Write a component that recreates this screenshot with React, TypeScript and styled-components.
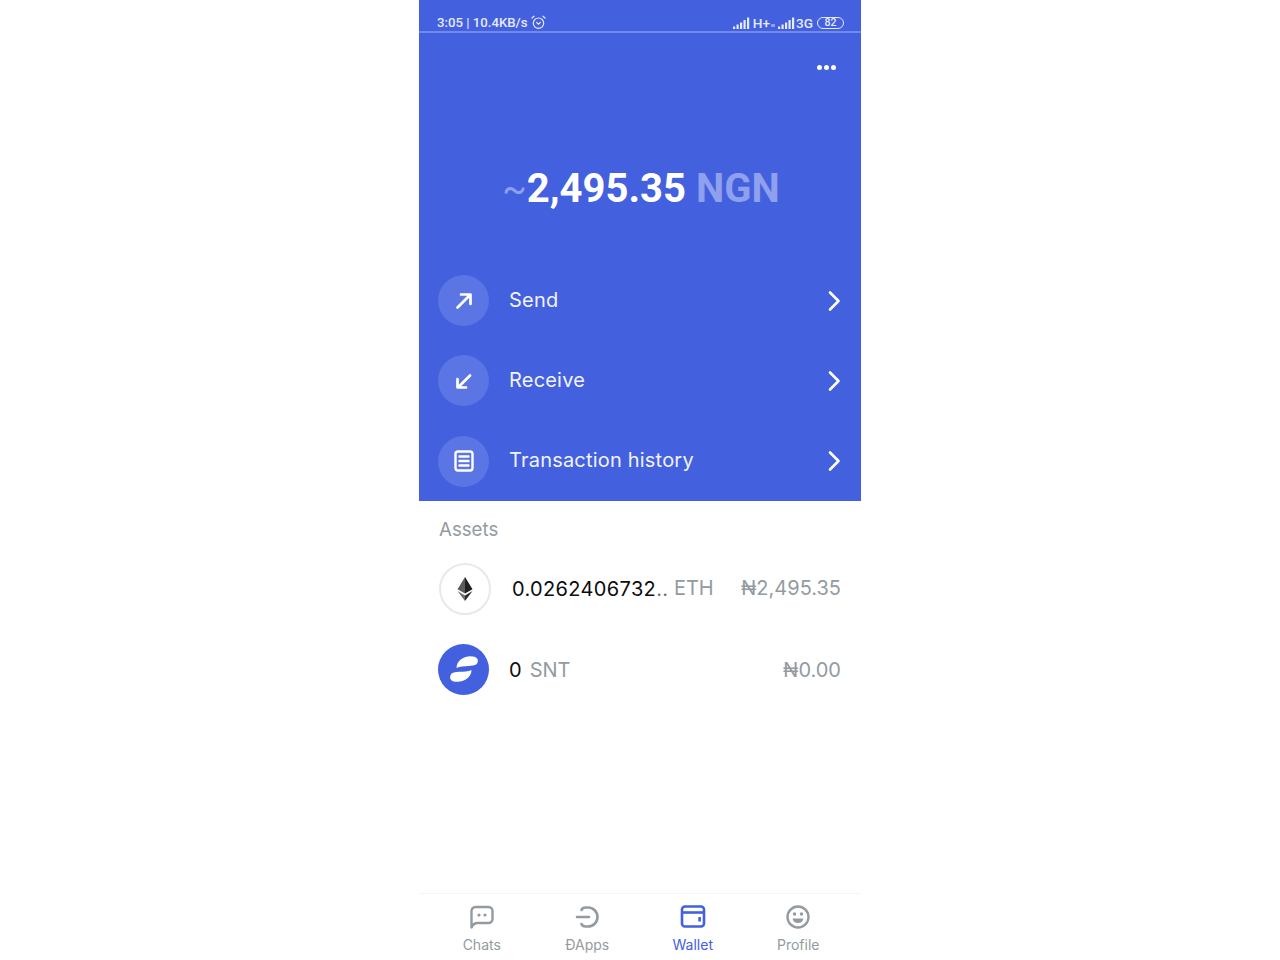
import React from "react";
import styled, { createGlobalStyle } from "styled-components";

const Global = createGlobalStyle`
  html, body { margin: 0; padding: 0; background: #fff; }
  body { font-family: Inter, "Liberation Sans", sans-serif; }
`;

const Page = styled.div`
  width: 1280px;
  height: 960px;
  display: flex;
  justify-content: center;
  background: #fff;
  overflow: hidden;
`;
const Phone = styled.div`
  width: 442px;
  height: 960px;
  display: flex;
  flex-direction: column;
`;
const Hero = styled.section`
  height: 501px;
  flex: none;
  background: #4360df;
  color: #fff;
  display: flex;
  flex-direction: column;
`;
const StatusBar = styled.div`
  height: 33px;
  box-sizing: border-box;
  padding: 14px 17px 0 18px;
  border-bottom: 2px solid #7389ea;
  display: flex;
  justify-content: space-between;
  align-items: center;
  font-family: Roboto, "Liberation Sans", sans-serif;
  font-weight: 500;
  font-size: 13.2px;
  line-height: 18px;
  color: #e6eafb;
  flex: none;
`;
const StatusGroup = styled.div`
  display: flex;
  align-items: center;
  gap: 3px;
`;
const NetworkLabel = styled.span<{ $pull?: boolean }>`
  font-size: 13.6px;
  margin-left: ${(p) => (p.$pull ? "-2px" : "0")};
`;
const TinyMark = styled.span`
  width: 4px;
  height: 3px;
  margin: 5px 0 0 -2px;
  background: #8fa0ec;
`;
const Battery = styled.span`
  width: 25px;
  height: 10px;
  border: 1.5px solid #e6eafb;
  border-radius: 6px;
  font-size: 10.5px;
  line-height: 10px;
  text-align: center;
  margin-left: 1px;
`;
const MoreRow = styled.div`
  height: 14px;
  margin-top: 27px;
  padding-right: 25px;
  display: flex;
  justify-content: flex-end;
  align-items: center;
  gap: 2px;
  flex: none;
`;
const Dot = styled.span`
  width: 5px;
  height: 5px;
  border-radius: 50%;
  background: #fff;
`;
const Balance = styled.div`
  margin-top: 89px;
  height: 52px;
  padding-left: 2px;
  display: flex;
  align-items: center;
  justify-content: center;
  font-family: Roboto, "Liberation Sans", sans-serif;
  font-weight: 700;
  font-size: 40px;
  line-height: 52px;
  white-space: nowrap;
  flex: none;
`;
const Tilde = styled.span`
  font-weight: 400;
  font-size: 36px;
  color: #8fa0ec;
`;
const Currency = styled.span`
  color: #8ea0ee;
  margin-left: 10px;
`;
const Actions = styled.div`
  margin-top: 60px;
  display: flex;
  flex-direction: column;
  gap: 29.3px;
  padding: 0 19px 0 20px;
`;
const ActionRow = styled.div`
  height: 51px;
  display: flex;
  align-items: center;
`;
const ActionCircle = styled.div`
  width: 51px;
  height: 51px;
  margin-left: -1px;
  flex: none;
  border-radius: 50%;
  background: #5b75e4;
  display: flex;
  align-items: center;
  justify-content: center;
`;
const ActionLabel = styled.div`
  margin-left: 20px;
  margin-top: -2px;
  flex: 1;
  font-size: 20px;
  letter-spacing: 0.2px;
  color: #f1f3fd;
`;
const AssetsTitle = styled.div`
  margin: 17px 0 0 20px;
  height: 24px;
  font-size: 18.7px;
  line-height: 24px;
  color: #939ba1;
  flex: none;
`;
const AssetRow = styled.div<{ $top: number }>`
  margin-top: ${(p) => p.$top}px;
  padding: 0 20px;
  height: 52px;
  display: flex;
  align-items: center;
  font-size: 20px;
  flex: none;
`;
const EthCircle = styled.div`
  width: 48px;
  height: 48px;
  border: 2px solid #e7e9ee;
  border-radius: 50%;
  flex: none;
  display: flex;
  align-items: center;
  justify-content: center;
`;
const SntCircle = styled.div`
  width: 51px;
  height: 51px;
  margin-left: -1px;
  border-radius: 50%;
  background: #4360df;
  flex: none;
  display: flex;
  align-items: center;
  justify-content: center;
`;
const Amount = styled.span<{ $gap: number; $spread?: boolean; $lift?: number }>`
  margin-left: ${(p) => p.$gap}px;
  margin-top: ${(p) => p.$lift ?? 0}px;
  color: #0c0c10;
  letter-spacing: ${(p) => (p.$spread ? "0.35px" : "0")};
`;
const Ellipsis = styled.span`
  color: #6f7479;
`;
const Symbol = styled.span<{ $gap: number; $drop?: number }>`
  margin-left: ${(p) => p.$gap}px;
  color: #939ba1;
  transform: translateY(${(p) => p.$drop ?? -1}px);
`;
const Fiat = styled.span<{ $drop?: number }>`
  margin-left: auto;
  color: #939ba1;
  font-family: Inter, "Noto Sans", sans-serif;
  transform: translateY(${(p) => p.$drop ?? -1}px);
`;
const Spacer = styled.div`
  flex: 1;
`;
const Nav = styled.nav`
  height: 67px;
  box-sizing: border-box;
  border-top: 1px solid #f5f5f7;
  padding: 0 10px;
  display: grid;
  grid-template-columns: repeat(4, 1fr);
  flex: none;
`;
const NavItem = styled.div<{ $active?: boolean }>`
  display: flex;
  flex-direction: column;
  align-items: center;
  padding-top: 10px;
  color: ${(p) => (p.$active ? "#4360df" : "#939ba1")};
  font-size: 14px;
  line-height: 18px;
  gap: 6px;
`;
const NavIcon = styled.svg`
  width: 26px;
  height: 26px;
  display: block;
`;

const Chevron = () => (
  <svg width="16" height="24" viewBox="0 0 16 24" fill="none" stroke="#fff" strokeWidth="2.6" strokeLinecap="round" strokeLinejoin="round">
    <path d="M4 3.5 L12.5 12 L4 20.5" />
  </svg>
);

const Signal = () => (
  <svg width="17" height="12" viewBox="0 0 17 12" fill="#e6eafb">
    <rect x="0" y="9.5" width="2.2" height="2.5" />
    <rect x="3.5" y="7.5" width="2.2" height="4.5" />
    <rect x="7" y="5.5" width="2.2" height="6.5" />
    <rect x="10.5" y="3" width="2.2" height="9" />
    <rect x="14" y="0.5" width="2.2" height="11.5" />
  </svg>
);

const Alarm = () => (
  <svg width="15" height="15" viewBox="0 0 15 15" fill="none" stroke="#e6eafb" strokeWidth="1.2" strokeLinecap="round" strokeLinejoin="round">
    <circle cx="7.5" cy="8.2" r="5.2" />
    <path d="M1 3 L3 1.2 M14 3 L12 1.2 M5.6 7.4 L7.5 9.2 L9.4 7.4" />
  </svg>
);

const tabs: { label: string; active?: boolean; icon: React.ReactNode }[] = [
  {
    label: "Chats",
    icon: (
      <>
        <path d="M2.5 23.5 V7 A4 4 0 0 1 6.5 3 H19.5 A4 4 0 0 1 23.5 7 V15 A4 4 0 0 1 19.5 19 H8 Q4 19.5 2.5 23.5 Z" fill="none" stroke="#939ba1" strokeWidth="2.4" strokeLinejoin="round" />
        <circle cx="10" cy="11" r="1.6" fill="#939ba1" />
        <circle cx="16" cy="11" r="1.6" fill="#939ba1" />
      </>
    ),
  },
  {
    label: "ÐApps",
    icon: (
      <path d="M7.5 6 Q8.5 3.5 11.5 3.5 H14 A9.3 9.3 0 0 1 14 22.5 H11.5 Q8.5 22.5 7.5 20 M3 13 H15" fill="none" stroke="#939ba1" strokeWidth="2.6" strokeLinecap="round" />
    ),
  },
  {
    label: "Wallet",
    active: true,
    icon: (
      <>
        <rect x="2" y="2.5" width="22" height="20" rx="3" fill="none" stroke="#4360df" strokeWidth="2.6" />
        <path d="M2 8.5 H24" stroke="#4360df" strokeWidth="2.6" />
        <rect x="18.3" y="13" width="2.6" height="4.5" fill="#4360df" />
      </>
    ),
  },
  {
    label: "Profile",
    icon: (
      <>
        <circle cx="13" cy="13" r="10.5" fill="none" stroke="#939ba1" strokeWidth="2.4" />
        <circle cx="9.5" cy="10" r="1.7" fill="#939ba1" />
        <circle cx="16.5" cy="10" r="1.7" fill="#939ba1" />
        <path d="M7.5 14.5 H18.5 Q17.5 19 13 19 Q8.5 19 7.5 14.5 Z" fill="#939ba1" />
      </>
    ),
  },
];

export default function App() {
  return (
    <>
      <Global />
      <Page>
        <Phone>
          <Hero>
            <StatusBar>
              <StatusGroup>
                <span>3:05 | 10.4KB/s</span>
                <Alarm />
              </StatusGroup>
              <StatusGroup>
                <Signal />
                <NetworkLabel>H+</NetworkLabel>
                <TinyMark />
                <Signal />
                <NetworkLabel $pull>3G</NetworkLabel>
                <Battery>82</Battery>
              </StatusGroup>
            </StatusBar>
            <MoreRow>
              <Dot />
              <Dot />
              <Dot />
            </MoreRow>
            <Balance>
              <Tilde>~</Tilde>
              <span>2,495.35</span>
              <Currency>NGN</Currency>
            </Balance>
            <Actions>
              <ActionRow>
                <ActionCircle>
                  <svg width="20" height="20" viewBox="0 0 20 20" fill="none" stroke="#fff" strokeWidth="2.7" strokeLinecap="round" strokeLinejoin="round">
                    <path d="M3.5 16.5 L16 4 M7 3.5 H16.5 V13" />
                  </svg>
                </ActionCircle>
                <ActionLabel>Send</ActionLabel>
                <Chevron />
              </ActionRow>
              <ActionRow>
                <ActionCircle>
                  <svg width="20" height="20" viewBox="0 0 20 20" fill="none" stroke="#fff" strokeWidth="2.7" strokeLinecap="round" strokeLinejoin="round">
                    <path d="M16 4.5 L4.5 16 M3.5 8 V16.5 H12" />
                  </svg>
                </ActionCircle>
                <ActionLabel>Receive</ActionLabel>
                <Chevron />
              </ActionRow>
              <ActionRow>
                <ActionCircle>
                  <svg width="22" height="24" viewBox="0 0 22 24" fill="none" stroke="#fff" strokeWidth="2.4" strokeLinecap="round">
                    <rect x="2.5" y="2.5" width="17" height="19" rx="2.5" />
                    <path d="M6.5 7.5 H15.5 M6.5 12 H15.5 M6.5 16.5 H15.5" />
                  </svg>
                </ActionCircle>
                <ActionLabel>Transaction history</ActionLabel>
                <Chevron />
              </ActionRow>
            </Actions>
          </Hero>
          <AssetsTitle>Assets</AssetsTitle>
          <AssetRow $top={21}>
            <EthCircle>
              <svg width="16" height="24" viewBox="0 0 16 24">
                <path d="M8 0 L0.5 12.2 L8 16.5 Z" fill="#5c5c5c" />
                <path d="M8 0 L15.5 12.2 L8 16.5 Z" fill="#1f1f1f" />
                <path d="M0.5 14 L8 24 L8 18.4 Z" fill="#6e6e6e" />
                <path d="M15.5 14 L8 24 L8 18.4 Z" fill="#2c2c2c" />
              </svg>
            </EthCircle>
            <Amount $gap={21} $spread>0.0262406732<Ellipsis>..</Ellipsis></Amount>
            <Symbol $gap={5.5}>ETH</Symbol>
            <Fiat>₦2,495.35</Fiat>
          </AssetRow>
          <AssetRow $top={28}>
            <SntCircle>
              <svg width="30" height="26" viewBox="0 0 28 24" fill="#fff">
                <path d="M7 11 C7 4 14 0 20 0 C26 0 28 3 26.5 6.5 C24.5 11 13 8 7 11 Z" />
                <path d="M21 13 C21 20 14 24 8 24 C2 24 0 21 1.5 17.5 C3.5 13 15 16 21 13 Z" />
              </svg>
            </SntCircle>
            <Amount $gap={20} $lift={2}>0</Amount>
            <Symbol $gap={8} $drop={1}>SNT</Symbol>
            <Fiat $drop={1}>₦0.00</Fiat>
          </AssetRow>
          <Spacer />
          <Nav>
            {tabs.map((t) => (
              <NavItem key={t.label} $active={t.active}>
                <NavIcon viewBox="0 0 26 26">{t.icon}</NavIcon>
                <span>{t.label}</span>
              </NavItem>
            ))}
          </Nav>
        </Phone>
      </Page>
    </>
  );
}
